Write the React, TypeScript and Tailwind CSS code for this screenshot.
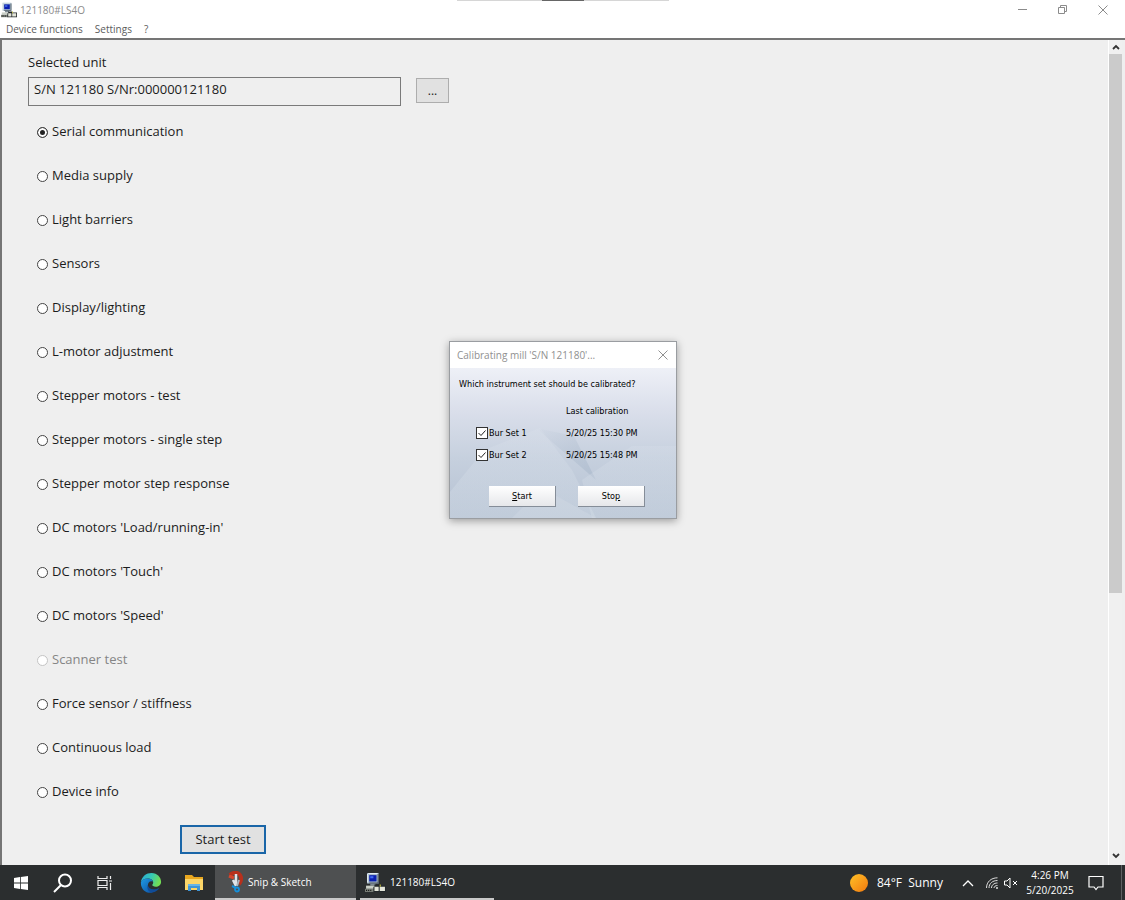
import { useState } from 'react';
import type { ReactNode } from 'react';

interface TestOption {
  id: string;
  label: string;
  disabled?: boolean;
}

const TESTS: TestOption[] = [
  { id: 'serial', label: 'Serial communication' },
  { id: 'media', label: 'Media supply' },
  { id: 'light', label: 'Light barriers' },
  { id: 'sensors', label: 'Sensors' },
  { id: 'display', label: 'Display/lighting' },
  { id: 'l-motor', label: 'L-motor adjustment' },
  { id: 'stepper', label: 'Stepper motors - test' },
  { id: 'stepper-single', label: 'Stepper motors - single step' },
  { id: 'stepper-response', label: 'Stepper motor step response' },
  { id: 'dc-load', label: "DC motors 'Load/running-in'" },
  { id: 'dc-touch', label: "DC motors 'Touch'" },
  { id: 'dc-speed', label: "DC motors 'Speed'" },
  { id: 'scanner', label: 'Scanner test', disabled: true },
  { id: 'force', label: 'Force sensor / stiffness' },
  { id: 'load', label: 'Continuous load' },
  { id: 'info', label: 'Device info' }
];

const BUR_SETS = [
  { id: 'bur-1', label: 'Bur Set 1', date: '5/20/25 15:30 PM' },
  { id: 'bur-2', label: 'Bur Set 2', date: '5/20/25 15:48 PM' }
];

const DeviceIcon = ({ className }: { className: string }) => (
  <svg viewBox="0 0 20 20" className={className} aria-hidden="true">
    <path d="M2 1h11v10H2z" fill="#a9bccb" />
    <path d="M3 1h9v1H3zM2 2h1v8H2z" fill="#e4edf3" />
    <path d="M4 3h7v6H4z" fill="#0a1fae" />
    <path d="M5 4h3v2H5z" fill="#3f68ef" />
    <path d="M12 2h1v9H4v-1h8z" fill="#46525c" />
    <path d="M5 11h5v2H5z" fill="#7c8a94" />
    <path d="M1 13h10v3H1z" fill="#c9cfc6" />
    <path d="M0 16h9v3H0z" fill="#7b8079" />
    <path d="M1 17h1v1H1zM3 17h1v1H3zM5 17h1v1H5z" fill="#111" />
    <path d="M9 12h5v1h6v6H8v-5h1z" fill="#22272a" />
    <path d="M9 14h4v4H9zM14 14h5v4h-5z" fill="#e3e5d9" />
    <path d="M14 12h1v2h-1z" fill="#c7c43e" />
  </svg>
);

const TitleBar = () => (
  <header className="relative flex h-5 items-center bg-white text-[#8b8b8b]">
    <DeviceIcon className="ml-px size-4" />
    <h1 className="ml-[3px] flex-1 text-[10px]">121180#LS4O</h1>
    <div className="absolute left-1/2 top-0 flex h-px w-[212px] -translate-x-1/2 justify-center bg-[#d6d6d6]">
      <span className="h-px w-[42px] bg-[#666]" />
    </div>
    <div className="flex pr-[2px]">
      <button type="button" aria-label="Minimize" className="flex h-5 w-10 items-center justify-center">
        <svg viewBox="0 0 10 10" className="size-[10px]" stroke="currentColor"><path d="M0 4.500h9" /></svg>
      </button>
      <button type="button" aria-label="Restore" className="flex h-5 w-10 items-center justify-center">
        <svg viewBox="0 0 10 10" className="size-[10px]" stroke="currentColor" fill="none">
          <path d="M.5 2.500h6v6h-6zM2.500 2.500V.5h6v6h-2" />
        </svg>
      </button>
      <button type="button" aria-label="Close" className="flex h-5 w-10 items-center justify-center">
        <svg viewBox="0 0 10 10" className="size-[10px]" stroke="currentColor"><path d="M.5.5l9 9M9.500.5l-9 9" /></svg>
      </button>
    </div>
  </header>
);

const MenuBar = () => (
  <nav className="flex h-[18px] items-center gap-3 bg-white px-[6px] text-[10px] text-[#5c5c5c]">
    <button type="button">Device functions</button>
    <button type="button">Settings</button>
    <button type="button">?</button>
  </nav>
);

const ScrollBar = () => (
  <div className="mr-[3px] flex w-[14px] flex-col border-l border-white bg-[#f0f0f0] text-[#333]">
    <button type="button" aria-label="Scroll up" className="flex h-[14px] items-center justify-center">
      <svg viewBox="0 0 8 6" className="h-[6px] w-2" fill="none" stroke="currentColor" strokeWidth="1.800"><path d="M1 5l3-3 3 3" /></svg>
    </button>
    <div className="flex-1">
      <div className="h-[68%] bg-[#cbcbcb]" />
    </div>
    <button type="button" aria-label="Scroll down" className="flex h-[18px] items-center justify-center">
      <svg viewBox="0 0 8 6" className="h-[6px] w-2" fill="none" stroke="currentColor" strokeWidth="1.800"><path d="M1 1l3 3 3-3" /></svg>
    </button>
  </div>
);

const TestForm = () => {
  const [selected, setSelected] = useState('serial');

  return (
    <form className="flex-1 pb-[10px] pl-[26px] pt-3 text-[13px] text-[#1c1c1c]" onSubmit={(e) => e.preventDefault()}>
      <label htmlFor="unit" className="block h-[25px] leading-5">Selected unit</label>
      <div className="flex items-start gap-[15px]">
        <input
          id="unit"
          readOnly
          value="S/N 121180 S/Nr:000000121180"
          className="h-[29px] w-[373px] border border-[#7a7a7a] bg-[#efefef] pb-[5px] pl-[5px] outline-none"
        />
        <button type="button" aria-label="Choose unit" className="mt-px h-[25px] w-[33px] border border-[#adadad] bg-[#e1e1e1] text-[12px] leading-5">
          ...
        </button>
      </div>
      <fieldset className="mt-1 pl-[9px]">
        {TESTS.map((test) => (
          <div key={test.id} className="flex h-11 items-center gap-1">
            <input
              id={test.id}
              type="radio"
              name="test"
              disabled={test.disabled}
              checked={selected === test.id}
              onChange={() => setSelected(test.id)}
              className="peer size-[11px] appearance-none rounded-full border border-[#444] bg-white checked:bg-[#222] checked:shadow-[inset_0_0_0_2px_white] disabled:border-[#c4c4c4]"
            />
            <label htmlFor={test.id} className="peer-disabled:text-[#858585]">{test.label}</label>
          </div>
        ))}
      </fieldset>
      <button type="submit" className="ml-[152px] mt-[11px] block h-[29px] w-[86px] border-2 border-[#1a66a8] bg-[#e1e1e1]">
        Start test
      </button>
    </form>
  );
};

const DialogBackdrop = () => (
  <svg viewBox="0 0 226 150" preserveAspectRatio="none" className="absolute inset-0 size-full" aria-hidden="true">
    <defs>
      <linearGradient id="dialog-sky" x1="0" y1="0" x2="0" y2="1">
        <stop offset="0" stopColor="#eef0f7" />
        <stop offset=".3" stopColor="#d9deea" />
        <stop offset=".6" stopColor="#c6d0de" />
        <stop offset="1" stopColor="#b5c1d2" />
      </linearGradient>
      <linearGradient id="dialog-fold" x1="0" y1="0" x2="0" y2="1">
        <stop offset="0" stopColor="#dfe5ee" stopOpacity=".2" />
        <stop offset="1" stopColor="#d7e1ea" stopOpacity=".35" />
      </linearGradient>
      <linearGradient id="dialog-crease" x1="0" y1="0" x2="1" y2="1">
        <stop offset="0" stopColor="#a8b7ca" stopOpacity="0" />
        <stop offset="1" stopColor="#a8b7ca" stopOpacity=".6" />
      </linearGradient>
    </defs>
    <path d="M0 0h226v150H0z" fill="url(#dialog-sky)" />
    <path d="M0 124L34 82l56-22 32 42 24 48H0z" fill="url(#dialog-fold)" />
    <path d="M86 60l60 52-22-44z" fill="url(#dialog-crease)" />
    <path d="M132 112l50-34h44v72h-84z" fill="url(#dialog-fold)" />
    <path d="M62 150l30-30 54 30z" fill="#d6dfe9" opacity=".3" />
  </svg>
);

const CalibrationDialog = () => {
  const [checked, setChecked] = useState<string[]>(['bur-1', 'bur-2']);

  const toggle = (id: string) =>
    setChecked((ids) => (ids.includes(id) ? ids.filter((i) => i !== id) : [...ids, id]));

  return (
    <section
      role="dialog"
      aria-labelledby="dialog-title"
      className="w-[228px] border border-[#9a9da1] bg-white shadow-[0_2px_8px_rgba(0,0,0,0.35)]"
    >
      <header className="flex h-[26px] items-center justify-between pl-[7px] pr-2 text-[#909090]">
        <h2 id="dialog-title" className="text-[10px]">Calibrating mill 'S/N 121180'...</h2>
        <button type="button" aria-label="Close dialog">
          <svg viewBox="0 0 10 10" className="size-[10px]" stroke="currentColor"><path d="M.5.5l9 9M9.500.5l-9 9" /></svg>
        </button>
      </header>
      <div className="relative h-[150px]">
        <DialogBackdrop />
        <div className="relative pl-[9px] pt-2 font-['DejaVu_Sans_Condensed','DejaVu_Sans',sans-serif] text-[9px] leading-4 text-black">
          <p>Which instrument set should be calibrated?</p>
          <table className="mt-2 w-full text-left">
            <thead>
              <tr className="h-[22px]">
                <td className="w-[107px]" />
                <th className="font-normal">Last calibration</th>
              </tr>
            </thead>
            <tbody>
              {BUR_SETS.map((set) => (
                <tr key={set.id} className="h-[22px]">
                  <td className="pl-[17px]">
                    <div className="flex items-center gap-px">
                      <span className="relative flex size-3">
                        <input
                          id={set.id}
                          type="checkbox"
                          checked={checked.includes(set.id)}
                          onChange={() => toggle(set.id)}
                          className="peer size-3 appearance-none border border-[#333] bg-white"
                        />
                        <svg viewBox="0 0 12 12" className="pointer-events-none absolute inset-0 hidden size-3 peer-checked:block" fill="none" stroke="#222">
                          <path d="M2.500 6l2.500 2.500 4.500-5" />
                        </svg>
                      </span>
                      <label htmlFor={set.id}>{set.label}</label>
                    </div>
                  </td>
                  <td>{set.date}</td>
                </tr>
              ))}
            </tbody>
          </table>
          <div className="mt-5 flex gap-[22px] pl-[30px]">
            <button type="button" className="h-[21px] w-[67px] border-b border-r border-[#858d98] bg-linear-to-b from-white to-[#e6e7ea]">
              <u>S</u>tart
            </button>
            <button type="button" className="h-[21px] w-[67px] border-b border-r border-[#858d98] bg-linear-to-b from-white to-[#e6e7ea]">
              Sto<u>p</u>
            </button>
          </div>
        </div>
      </div>
    </section>
  );
};

const TaskButton = ({ label, children }: { label: string; children: ReactNode }) => (
  <button type="button" aria-label={label} className="flex w-[42px] items-center justify-center">
    {children}
  </button>
);

const EdgeIcon = () => (
  <svg viewBox="0 0 24 24" className="size-[22px]" aria-hidden="true">
    <defs>
      <linearGradient id="edge-top" x1="0" y1="0" x2="1" y2=".3">
        <stop offset="0" stopColor="#2aa7dd" />
        <stop offset=".55" stopColor="#36c9b4" />
        <stop offset="1" stopColor="#71dc55" />
      </linearGradient>
      <linearGradient id="edge-low" x1="0" y1="0" x2="1" y2="1">
        <stop offset="0" stopColor="#1f9be5" />
        <stop offset="1" stopColor="#0c4a9d" />
      </linearGradient>
    </defs>
    <path d="M1 11C2 4.500 7 1 12.500 1 19 1 23 6 23 10.500c0 3.500-2.800 5.500-5.800 5.500-2.500 0-3.900-.8-3.900-1.700 0-.8 1.100-1.200 1.100-3.200C14.400 8.600 11.500 7 8.500 7 5 7 2.300 8.700 1 11z" fill="url(#edge-top)" />
    <path d="M1 11c1.300-2.600 4-4 7.500-4 3 0 5.400 1.500 5.900 3.500-4-1.500-6.200 1.500-5.700 5 .6 4 4.300 6.500 8.300 5.300C10 25.800.3 20.800 1 11z" fill="url(#edge-low)" />
    <path d="M8.600 14.200c.5 4.400 6.200 6.300 12.600 3-2 3.600-5.600 5.400-8.700 4.800-3.900-.8-5.200-4.400-3.900-7.800z" fill="#104c98" />
  </svg>
);

const SnipIcon = () => (
  <svg viewBox="0 0 16 22" className="h-[22px] w-4" fill="none" aria-hidden="true">
    <path d="M3 4C6 1 11 1 13 4c2 3 1 7-1 9" stroke="#b8301c" strokeWidth="4" />
    <path d="M2 5l5 2" stroke="#d8452c" strokeWidth="3" />
    <path d="M9 3v11M6 9l3 6" stroke="#dfe4e8" strokeWidth="2.500" />
    <path d="M12 9l-2 6" stroke="#aab4bc" strokeWidth="2" />
    <circle cx="10" cy="18.500" r="2" stroke="#1590dc" strokeWidth="1.800" />
    <path d="M5 15l4 2" stroke="#1590dc" strokeWidth="2" />
  </svg>
);

const Taskbar = () => (
  <footer className="flex h-[35px] bg-[#2b2e2f] text-[10px] text-white">
    <TaskButton label="Start menu">
      <svg viewBox="0 0 14 14" className="size-[14px]" fill="white"><path d="M0 2l6-.9V6.600H0zM6.800 1L14 0v6.600H6.800zM0 7.400h6v5.500L0 12zM6.800 7.400H14V14l-7.200-1z" /></svg>
    </TaskButton>
    <TaskButton label="Search">
      <svg viewBox="0 0 20 20" className="size-5" fill="none" stroke="white" strokeWidth="2"><circle cx="12" cy="7.500" r="6" /><path d="M8 12l-7 7" /></svg>
    </TaskButton>
    <TaskButton label="Task view">
      <svg viewBox="0 0 16 14" className="h-[14px] w-4" fill="none" stroke="#eee" strokeWidth="1.200">
        <path d="M1 0v2.500h9V0M1 14v-2.500h9V14M1 4.500h9v5H1zM13.500 0v3M13.500 7v7M12 5h3" />
      </svg>
    </TaskButton>
    <div className="flex w-[89px] pl-[3px]">
      <button type="button" aria-label="Browser" className="flex flex-1 items-center justify-center">
        <EdgeIcon />
      </button>
      <button type="button" aria-label="File explorer" className="flex flex-1 items-center justify-center">
        <svg viewBox="0 0 20 18" className="h-[18px] w-5">
          <path d="M1 1h7l2 2h9v13H1z" fill="#e9a820" />
          <path d="M1 5h18v11H1z" fill="#fbd568" />
          <path d="M4 10h12v7h-3v-3H7v3H4z" fill="#3e95d6" />
          <path d="M4 10h12v2H4z" fill="#66b4e8" />
        </svg>
      </button>
    </div>
    <button type="button" className="flex w-[141px] items-center gap-[5px] border-b-2 border-[#c9c9c9] bg-[#4e5051] pl-3 pt-px">
      <SnipIcon />
      Snip &amp; Sketch
    </button>
    <button type="button" className="ml-1 flex w-[134px] items-center gap-1 border-b-2 border-[#c9c9c9] pl-[5px] pt-px">
      <DeviceIcon className="size-[21px]" />
      121180#LS4O
    </button>
    <div className="ml-auto flex items-center">
      <span className="size-[18px] rounded-full bg-linear-to-br from-[#ffc126] to-[#f0780f]" />
      <span className="ml-[9px] w-[85px] whitespace-pre text-[12px]">84°F  Sunny</span>
      <button type="button" aria-label="Hidden icons" className="mr-3">
        <svg viewBox="0 0 12 8" className="h-2 w-3" fill="none" stroke="white" strokeWidth="1.300"><path d="M1 7l5-5 5 5" /></svg>
      </button>
      <svg viewBox="0 0 12 12" className="size-3" fill="none" stroke="#ddd">
        <path d="M.5 11C.5 5 5 .8 11.500.8M3 11c0-4.500 3.500-7.500 8.500-7.500M5.500 11c0-3 2.500-5 6-5M8 11c0-1.500 1.500-2.500 3.500-2.500" />
        <circle cx="11" cy="11" r=".6" fill="#fff" />
      </svg>
      <svg viewBox="0 0 14 12" className="ml-[6px] h-3 w-[14px]" fill="none" stroke="white">
        <path d="M.5 4h2.500l3-3v10L3 8H.5zM9 4l4 4M13 4L9 8" />
      </svg>
      <div className="ml-2 w-12 text-center leading-[15px]">
        <div>4:26 PM</div>
        <div>5/20/2025</div>
      </div>
      <button type="button" aria-label="Notifications" className="ml-[14px] mr-[17px]">
        <svg viewBox="0 0 16 16" className="size-4" fill="none" stroke="white" strokeWidth="1.200"><path d="M1 1.500h14v10.500H10l-2 2.500-2-2.500H1z" /></svg>
      </button>
      <span className="mr-[3px] h-[35px] w-px bg-[#5d6061]" />
    </div>
  </footer>
);

export default function App() {
  return (
    <div className="flex min-h-screen flex-col bg-white font-['Open_Sans','Noto_Sans',sans-serif]">
      <div className="relative flex flex-1 flex-col">
        <TitleBar />
        <MenuBar />
        <main className="flex flex-1 border-l-2 border-t-2 border-[#757575] bg-[#efefef]">
          <TestForm />
          <ScrollBar />
        </main>
        <div className="pointer-events-none absolute inset-0 grid place-items-center pb-[5px] pl-px">
          <div className="pointer-events-auto">
            <CalibrationDialog />
          </div>
        </div>
      </div>
      <Taskbar />
    </div>
  );
}
